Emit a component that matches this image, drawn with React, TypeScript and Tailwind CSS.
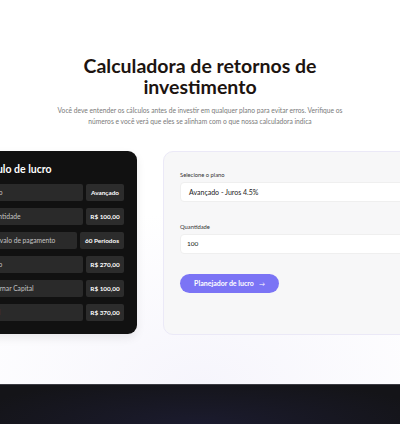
import React from "react";

const rows: { label: string; value: string; wide?: boolean }[] = [
  { label: "Plano", value: "Avançado" },
  { label: "Quantidade", value: "R$ 100,00" },
  { label: "Intervalo de pagamento", value: "60 Períodos", wide: true },
  { label: "Lucro", value: "R$ 270,00" },
  { label: "Retornar Capital", value: "R$ 100,00" },
  { label: "Total", value: "R$ 370,00" },
];

export default function App() {
  return (
    <div
      className="w-[400px] h-[424px] overflow-hidden bg-white flex flex-col"
      style={{ fontFamily: "Lato, 'Noto Sans', sans-serif" }}
    >
      <section className="relative h-[384px] flex flex-col items-center bg-[radial-gradient(ellipse_70%_45%_at_50%_100%,#f6f5fc_0%,#ffffff_100%)]">
        <h1 className="mt-[55px] text-[19.5px] leading-[21px] font-bold text-[#1c1410] text-center w-[260px]">
          Calculadora de retornos de investimento
        </h1>
        <p className="mt-[8px] text-[6.7px] leading-[11px] text-[#7a7a7a] text-center w-[292px]">
          Você deve entender os cálculos antes de investir em qualquer plano para evitar erros. Verifique os
          números e você verá que eles se alinham com o que nossa calculadora indica
        </p>

        <div className="mt-[24px] self-start ml-[-36px] flex gap-[26px]">
          <div className="w-[173px] h-[183px] rounded-[9px] bg-[#111111] px-[13px] pt-[11px] shadow-[0_4px_10px_rgba(0,0,0,0.08)]">
            <h2 className="text-[10.5px] font-bold text-white leading-[14px]">Cálculo de lucro</h2>
            <div className="mt-[8px] flex flex-col gap-[7px]">
              {rows.map((r) => (
                <div key={r.label} className="flex gap-[3px] h-[17px]">
                  <div className="flex-1 rounded-[2px] bg-[#2a2a2a] flex items-center pl-[9px] text-[6.7px] text-[#c4c4c4]">
                    {r.label}
                  </div>
                  <div
                    className={
                      (r.wide ? "w-[44px]" : "w-[38px]") +
                      " rounded-[2px] bg-[#2c2c2c] flex items-center justify-center text-[6.4px] font-bold text-white"
                    }
                  >
                    {r.value}
                  </div>
                </div>
              ))}
            </div>
          </div>

          <div className="w-[280px] h-[184px] rounded-[10px] bg-[#f7f7f8] border border-[#ebe9f7] pl-[16px] pt-[19px]">
            <label className="block text-[5.8px] text-[#333] leading-[8px]">Selecione o plano</label>
            <div className="mt-[3px] h-[20px] rounded-[4px] bg-white border border-[#efefef] flex items-center pl-[8px] text-[7px] text-[#222]">
              Avançado - Juros 4.5%
            </div>
            <label className="block mt-[21px] text-[5.8px] text-[#333] leading-[8px]">Quantidade</label>
            <div className="mt-[3px] h-[20px] rounded-[4px] bg-white border border-[#efefef] flex items-center pl-[6px] text-[6.5px] text-[#222]">
              100
            </div>
            <button className="mt-[20px] h-[19px] w-[99px] rounded-full bg-[#7b74f5] flex items-center justify-center gap-[5px] text-[7px] font-bold text-white">
              Planejador de lucro
              <span className="text-[6px] font-normal">→</span>
            </button>
          </div>
        </div>
      </section>
      <footer className="h-[40px] border-t border-[#3b3b42] bg-[radial-gradient(ellipse_60%_120%_at_50%_100%,#1b1b2e_0%,#141418_100%)]" />
    </div>
  );
}
